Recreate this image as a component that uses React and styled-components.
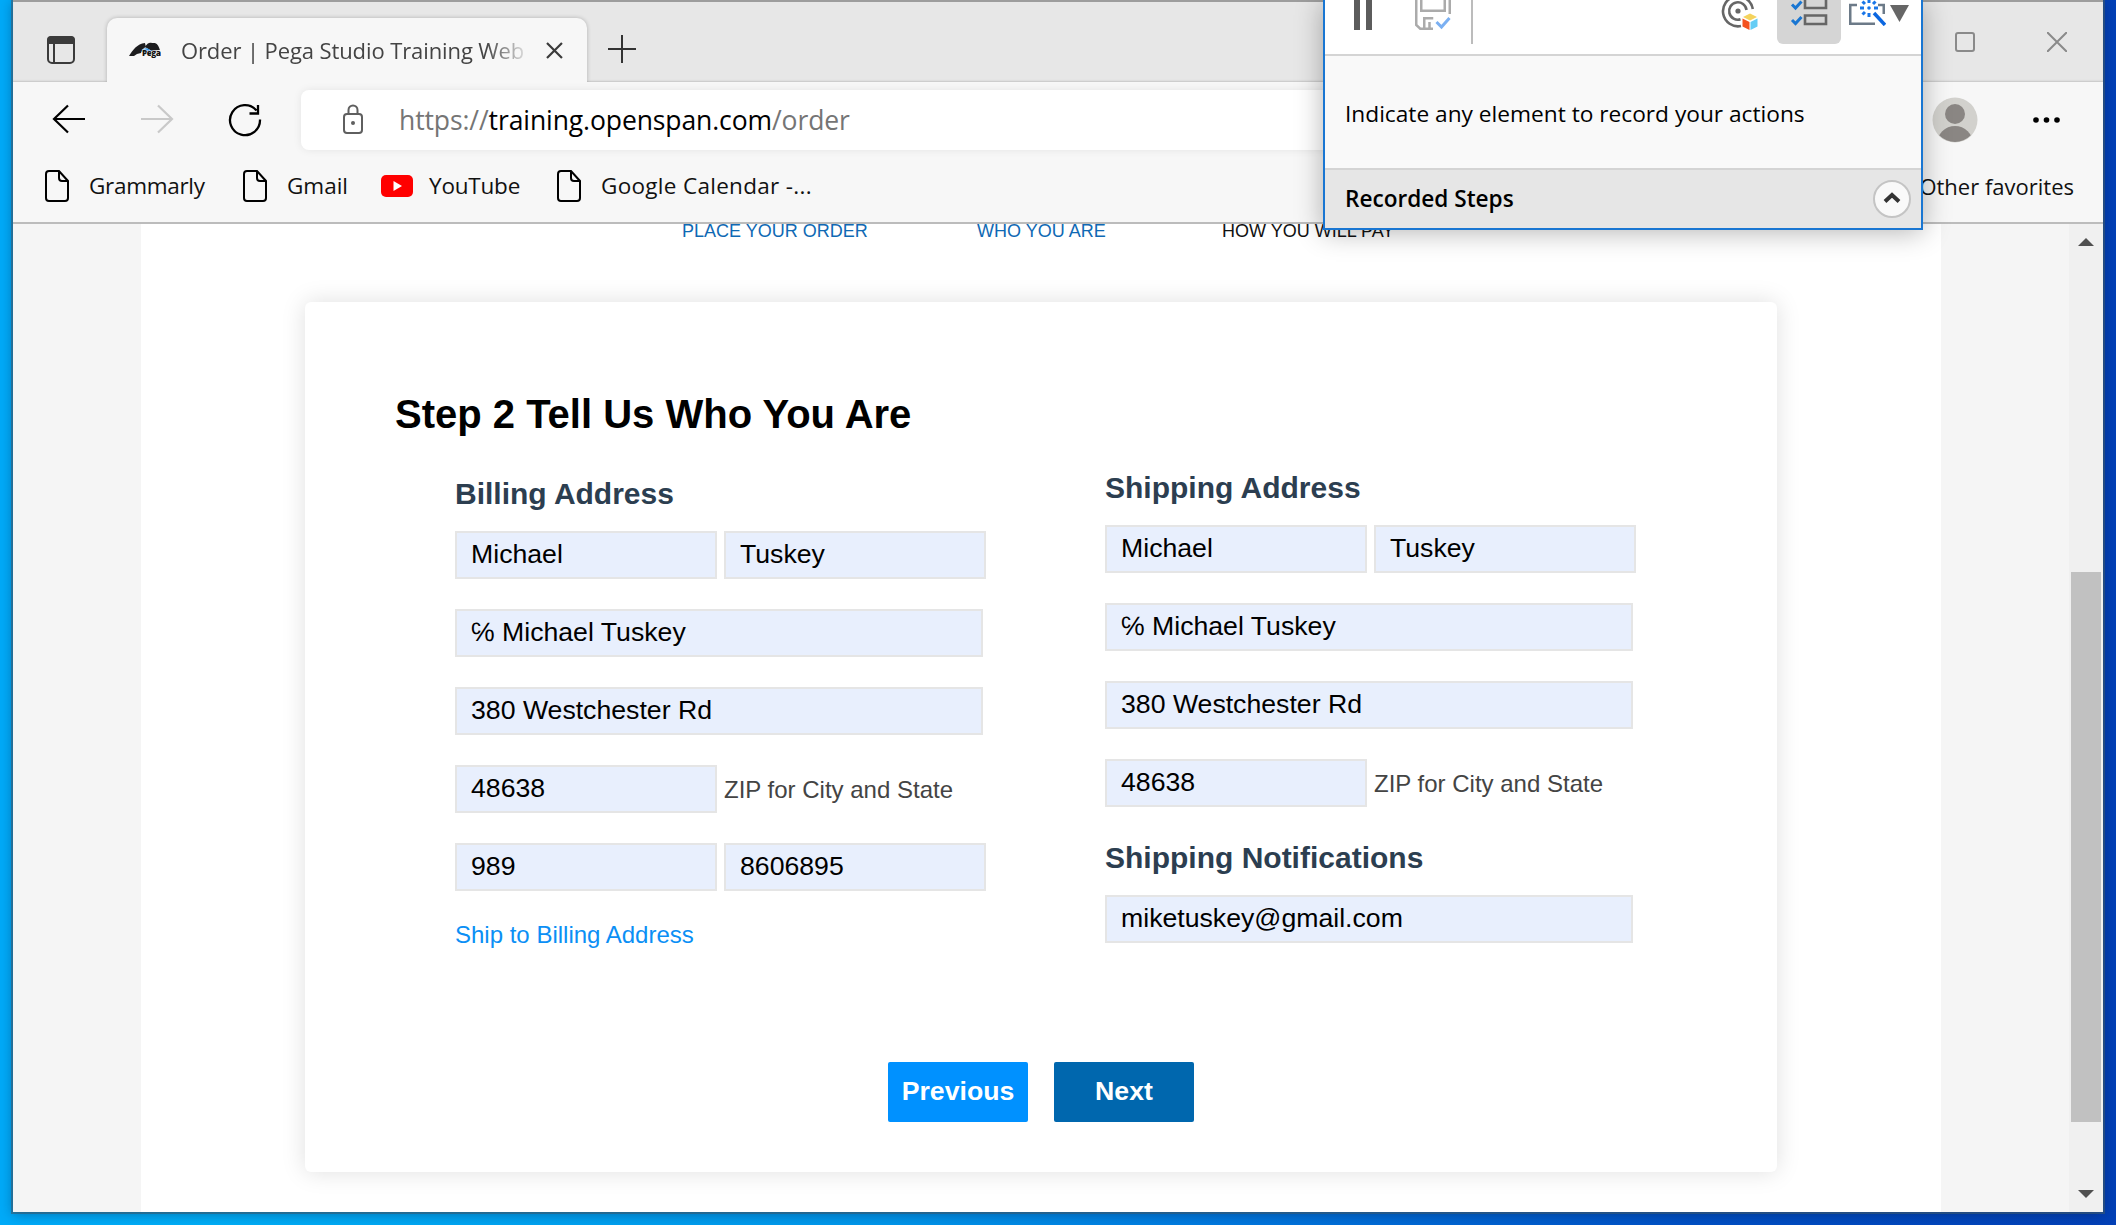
import React from "react";
import styled, { createGlobalStyle } from "styled-components";

const Global = createGlobalStyle`
  *, *::before, *::after { box-sizing: border-box; }
  html, body { margin: 0; padding: 0; overflow: hidden; }
  body { font-family: "Liberation Sans", Arial, sans-serif; }
`;

const ui = `"Open Sans", "Noto Sans", sans-serif`;

const Desktop = styled.div`
  width: 2116px;
  height: 1225px;
  padding: 0 13px 13px;
  overflow: hidden;
  background: linear-gradient(90deg, #00aaf8 0, #00aef6 10%, #0096ea 42%, #0078de 58%, #0050c4 80%, #0340b6 100%);
`;

const Window = styled.div`
  width: 2090px;
  height: 1212px;
  display: flex;
  flex-direction: column;
  border-top: 2px solid #9d9d9d;
  background: #f7f7f7;
  box-shadow: 0 0 0 2px rgba(60, 90, 110, 0.6), 0 2px 12px rgba(0, 20, 60, 0.4);
`;

const TabStrip = styled.div`
  height: 80px;
  flex: none;
  display: flex;
  align-items: flex-end;
  padding-left: 34px;
  background: #e7e7e7;
  box-shadow: inset 0 -2px 2px -1px #c4c4c4;
`;

const StripIcon = styled.svg`
  flex: none;
  width: 28px;
  height: 28px;
  margin: 0 ${(p) => p.$after || 0}px ${(p) => p.$up || 0}px ${(p) => p.$before || 0}px;
`;

const Tab = styled.div`
  width: 480px;
  height: 64px;
  display: flex;
  align-items: center;
  padding: 0 24px 0 22px;
  background: #f7f7f7;
  border-radius: 10px 10px 0 0;
  box-shadow: 0 0 4px rgba(0, 0, 0, 0.24);
  clip-path: inset(-6px -6px 0 -6px);
`;

const TabTitle = styled.div`
  width: 346px;
  margin-left: 20px;
  margin-right: 20px;
  overflow: hidden;
  white-space: nowrap;
  font: 400 22px/32px ${ui};
  letter-spacing: -0.1px;
  color: #444;
  -webkit-mask-image: linear-gradient(90deg, #000 305px, transparent 350px);
  mask-image: linear-gradient(90deg, #000 305px, transparent 350px);
`;

const WindowButtons = styled.div`
  margin-left: auto;
  display: flex;
  align-items: center;
  gap: 72px;
  padding: 0 36px 30px 0;
`;

const Toolbar = styled.div`
  height: 76px;
  flex: none;
  display: flex;
  align-items: center;
  padding: 0 43px 0 38px;
`;

const NavIcon = styled.svg`
  flex: none;
  width: 36px;
  height: 36px;
  margin-right: 52px;
`;

const Address = styled.div`
  flex: none;
  width: 1612px;
  height: 60px;
  margin-left: -14px;
  display: flex;
  align-items: center;
  padding-left: 38px;
  background: #fff;
  border-radius: 8px;
  box-shadow: 0 0 8px rgba(0, 0, 0, 0.08);
`;

const Url = styled.div`
  margin-left: 32px;
  white-space: nowrap;
  font: 400 26.5px/40px ${ui};
  letter-spacing: -0.1px;
  color: #757575;
  b { font-weight: 400; color: #000; }
`;

const Avatar = styled.svg`
  width: 46px;
  height: 46px;
  flex: none;
  margin-left: 19px;
`;

const Dots = styled.svg`
  width: 28px;
  height: 8px;
  flex: none;
  margin-left: auto;
`;

const Favorites = styled.div`
  height: 66px;
  flex: none;
  display: flex;
  align-items: flex-start;
  padding: 10px 29px 0 32px;
  border-bottom: 2px solid #bcbcbc;
`;

const Favorite = styled.div`
  width: ${(p) => p.$w}px;
  display: flex;
  align-items: center;
  gap: ${(p) => p.$gap || 20}px;
  white-space: nowrap;
  font: 400 22.5px/36px ${ui};
  letter-spacing: ${(p) => p.$track || 0}px;
  color: #111;
  svg { flex: none; }
`;

const OtherFavorites = styled.div`
  margin-left: auto;
  white-space: nowrap;
  font: 400 22px/36px ${ui};
  color: #111;
`;

const Viewport = styled.div`
  flex: 1;
  min-height: 0;
  display: flex;
  background: #f5f5f5;
`;

const Page = styled.main`
  width: 1800px;
  margin: 0 128px;
  padding: 0 164px;
  background: #fff;
  overflow: hidden;
`;

const Steps = styled.div`
  display: flex;
  height: 78px;
  padding-left: 377px;
  font-size: 18px;
  line-height: 20px;
  white-space: nowrap;
`;

const Step = styled.div`
  width: ${(p) => p.$w}px;
  margin-top: -3px;
  color: ${(p) => (p.$done ? "#0f69b4" : "#111")};
`;

const Card = styled.section`
  width: 1472px;
  height: 870px;
  display: flex;
  flex-direction: column;
  background: #fff;
  border-radius: 6px;
  box-shadow: 0 0 24px rgba(0, 0, 0, 0.13);
`;

const Title = styled.h1`
  margin: 0;
  padding: 89px 0 0 90px;
  font-size: 40px;
  line-height: 46px;
  font-weight: 700;
  color: #000;
`;

const Columns = styled.div`
  display: flex;
  height: 625px;
  padding-left: 150px;
`;

const Column = styled.div`
  width: 650px;
  padding-top: ${(p) => p.$top}px;
`;

const SectionTitle = styled.h2`
  margin: ${(p) => p.$top || 0}px 0 19px;
  font-size: 30px;
  line-height: 36px;
  font-weight: 700;
  color: #2c3e50;
`;

const Row = styled.div`
  display: flex;
  align-items: center;
  gap: 7px;
  margin-bottom: 30px;
`;

const Field = styled.input`
  width: ${(p) => (p.$wide ? 528 : 262)}px;
  height: 48px;
  padding: 0 14px 2px;
  border: 2px solid #e5e5e5;
  border-radius: 0;
  background: #e8effd;
  font: 400 26.67px "Liberation Sans", Arial, "DejaVu Sans", sans-serif;
  color: #000;
  outline: none;
`;

const Hint = styled.span`
  font-size: 24px;
  line-height: 28px;
  padding-top: 1px;
  color: #444;
`;

const ShipLink = styled.a`
  display: block;
  font-size: 24px;
  line-height: 28px;
  color: #0b8ff5;
`;

const Actions = styled.div`
  display: flex;
  justify-content: center;
  gap: 26px;
`;

const Action = styled.button`
  width: 140px;
  height: 60px;
  padding: 0 0 2px;
  border: 0;
  border-radius: 2px;
  background: ${(p) => (p.$primary ? "#0067ae" : "#0091ff")};
  color: #fff;
  font: 700 26.67px "Liberation Sans", Arial, sans-serif;
`;

const Scrollbar = styled.div`
  width: 34px;
  flex: none;
  display: flex;
  flex-direction: column;
  align-items: center;
  padding: 14px 0;
  background: #f0f0f0;
`;

const Thumb = styled.div`
  width: 30px;
  height: 550px;
  margin-top: 326px;
  margin-bottom: auto;
  background: #c1c1c1;
`;

const Arrow = styled.svg`
  width: 16px;
  height: 8px;
  flex: none;
`;

const Recorder = styled.aside`
  position: absolute;
  left: 1323px;
  top: 0;
  width: 600px;
  height: 230px;
  display: flex;
  flex-direction: column;
  border: 2px solid #1976d2;
  border-top: 0;
  background: #f9f9f9;
  box-shadow: 0 2px 26px rgba(0, 0, 0, 0.3);
  font-family: ${ui};
  color: #000;
`;

const RecorderTools = styled.div`
  height: 56px;
  flex: none;
  display: flex;
  align-items: flex-start;
  background: #fff;
  border-bottom: 2px solid #d4d4d4;
`;

const Tool = styled.svg`
  flex: none;
  margin-left: ${(p) => p.$before || 0}px;
`;

const ToolDivider = styled.div`
  width: 2px;
  height: 44px;
  margin-left: 20px;
  background: #bcbcbc;
`;

const ActiveTool = styled.div`
  width: 64px;
  height: 44px;
  margin-left: 18px;
  border-radius: 0 0 6px 6px;
  background: #d5d5d5;
`;

const Message = styled.div`
  height: 114px;
  flex: none;
  display: flex;
  align-items: center;
  padding-left: 20px;
  padding-top: 3px;
  border-bottom: 2px solid #d4d4d4;
  white-space: nowrap;
  font-size: 22.7px;
`;

const RecordedHeader = styled.div`
  flex: 1;
  display: flex;
  align-items: center;
  justify-content: space-between;
  padding: 0 10px 0 20px;
  background: #e6e6e6;
  font-size: 22.6px;
  font-weight: 600;
  span { padding-bottom: 2px; }
`;

const PageIcon = () => (
  <svg width="24" height="32" viewBox="0 0 24 32" fill="none" stroke="#000" strokeWidth="2">
    <path d="M4 1h10l9 10v17a3 3 0 0 1-3 3H4a3 3 0 0 1-3-3V4a3 3 0 0 1 3-3z" />
    <path d="M14 1v7a3 3 0 0 0 3 3h6" />
  </svg>
);

const Check = ({ y }) => <path d={`M15 ${y}l3.500 3.500 6-6.500`} fill="none" stroke="#1976d2" strokeWidth="3" />;

export default function App() {
  return (
    <Desktop>
      <Global />
      <Window>
        <TabStrip>
          <StripIcon $after={32} $up={18} viewBox="0 0 28 28">
            <rect x="4" y="1" width="20" height="26" rx="4" fill="none" stroke="none" />
            <rect x="1" y="1" width="26" height="26" rx="4" fill="none" stroke="#3b3b3b" strokeWidth="2" />
            <path d="M0 8V4a4 4 0 0 1 4-4h20a4 4 0 0 1 4 4v4z" fill="#3b3b3b" />
            <path d="M7 8v19" stroke="#3b3b3b" strokeWidth="2" />
          </StripIcon>
          <Tab>
            <svg width="32" height="17" viewBox="0 0 32 17">
              <path d="M0 14C4 8 8 2 16 1l1 4c-3 1-4 4-5 6l-4 1-3 2z" fill="#1d1d1f" />
              <path d="M16 5c2-4 5-5 7-4h3c3 1 4 4 5 7l-8 1z" fill="#1d1d1f" />
              <path d="M12 10c2-4 6-5 9-2 2 1 3 1 4 1l-1 1z" fill="#2b95e8" />
              <text x="13" y="14.500" fontFamily="Open Sans, sans-serif" fontSize="8.500" fontWeight="800" textLength="19" fill="#111" stroke="#f7f7f7" strokeWidth="1.200" paintOrder="stroke">Pega</text>
            </svg>
            <TabTitle>Order | Pega Studio Training Web</TabTitle>
            <svg width="17" height="17" viewBox="0 0 17 17" stroke="#3b3b3b" strokeWidth="2.200">
              <path d="M1 1l15 15M16 1L1 16" />
            </svg>
          </Tab>
          <StripIcon $before={21} $up={19} viewBox="0 0 28 28" stroke="#333" strokeWidth="2">
            <path d="M14 0v28M0 14h28" />
          </StripIcon>
          <WindowButtons>
            <svg width="20" height="20" viewBox="0 0 20 20">
              <rect x="1" y="1" width="18" height="18" rx="2" fill="none" stroke="#8a8a8a" strokeWidth="2" />
            </svg>
            <svg width="20" height="20" viewBox="0 0 20 20" stroke="#8a8a8a" strokeWidth="2">
              <path d="M0 0l20 20M20 0L0 20" />
            </svg>
          </WindowButtons>
        </TabStrip>
        <Toolbar>
          <NavIcon viewBox="0 0 36 36" fill="none" stroke="#000" strokeWidth="2.200">
            <path d="M34 17H3M17 3.500L3 17l14 13.500" />
          </NavIcon>
          <NavIcon viewBox="0 0 36 36" fill="none" stroke="#c9c9c9" strokeWidth="2.200">
            <path d="M2 17h31M19 3.500L33 17 19 30.500" />
          </NavIcon>
          <NavIcon viewBox="0 0 36 36" fill="none" stroke="#000" strokeWidth="2.300">
            <path d="M33 17.500A15 15 0 1 1 29.500 8.500M31 3v8.500h-8.500" />
          </NavIcon>
          <Address>
            <svg width="28" height="32" viewBox="0 0 28 32" fill="none" stroke="#5f5f5f" strokeWidth="2">
              <rect x="5" y="10" width="18" height="19" rx="3" />
              <path d="M9.500 10V6a4.500 4.500 0 0 1 9 0v4" />
              <circle cx="14" cy="19" r="2" fill="#5f5f5f" stroke="none" />
            </svg>
            <Url>https://<b>training.openspan.com</b>/order</Url>
          </Address>
          <Avatar viewBox="0 0 46 46">
            <defs>
              <clipPath id="face"><circle cx="23" cy="23" r="22" /></clipPath>
            </defs>
            <circle cx="23" cy="23" r="22.500" fill="#d2d1cd" />
            <g clipPath="url(#face)" fill="#8a8683">
              <circle cx="23" cy="17" r="10" />
              <circle cx="23" cy="47" r="18" />
            </g>
          </Avatar>
          <Dots viewBox="0 0 28 8">
            <circle cx="4" cy="4" r="2.800" /><circle cx="14.500" cy="4" r="2.800" /><circle cx="25" cy="4" r="2.800" />
          </Dots>
        </Toolbar>
        <Favorites>
          <Favorite $w={198} $track={-0.3}><PageIcon />Grammarly</Favorite>
          <Favorite $w={138}><PageIcon />Gmail</Favorite>
          <Favorite $w={176} $gap={16} $track={-0.2}>
            <svg width="32" height="22" viewBox="0 0 32 22">
              <rect width="32" height="22" rx="5" fill="#f00" />
              <path d="M12.500 6l8.500 5-8.500 5z" fill="#fff" />
            </svg>
            YouTube
          </Favorite>
          <Favorite $w={280} $track={0.3}><PageIcon />Google Calendar -...</Favorite>
          <OtherFavorites>Other favorites</OtherFavorites>
        </Favorites>
        <Viewport>
          <Page>
            <Steps>
              <Step $w={295} $done>PLACE YOUR ORDER</Step>
              <Step $w={245} $done>WHO YOU ARE</Step>
              <Step $w={180}>HOW YOU WILL PAY</Step>
            </Steps>
            <Card>
              <Title>Step 2 Tell Us Who You Are</Title>
              <Columns>
                <Column $top={39}>
                  <SectionTitle>Billing Address</SectionTitle>
                  <Row><Field defaultValue="Michael" /><Field defaultValue="Tuskey" /></Row>
                  <Row><Field $wide defaultValue="℅ Michael Tuskey" /></Row>
                  <Row><Field $wide defaultValue="380 Westchester Rd" /></Row>
                  <Row><Field defaultValue="48638" /><Hint>ZIP for City and State</Hint></Row>
                  <Row><Field defaultValue="989" /><Field defaultValue="8606895" /></Row>
                  <ShipLink>Ship to Billing Address</ShipLink>
                </Column>
                <Column $top={33}>
                  <SectionTitle>Shipping Address</SectionTitle>
                  <Row><Field defaultValue="Michael" /><Field defaultValue="Tuskey" /></Row>
                  <Row><Field $wide defaultValue="℅ Michael Tuskey" /></Row>
                  <Row><Field $wide defaultValue="380 Westchester Rd" /></Row>
                  <Row><Field defaultValue="48638" /><Hint>ZIP for City and State</Hint></Row>
                  <SectionTitle $top={33}>Shipping Notifications</SectionTitle>
                  <Row><Field $wide defaultValue="miketuskey@gmail.com" /></Row>
                </Column>
              </Columns>
              <Actions>
                <Action>Previous</Action>
                <Action $primary>Next</Action>
              </Actions>
            </Card>
          </Page>
          <Scrollbar>
            <Arrow viewBox="0 0 16 8"><path d="M0 8l8-8 8 8z" fill="#505050" /></Arrow>
            <Thumb />
            <Arrow viewBox="0 0 16 8"><path d="M0 0l8 8 8-8z" fill="#505050" /></Arrow>
          </Scrollbar>
        </Viewport>
      </Window>

      <Recorder>
        <RecorderTools>
          <Tool $before={29} width="18" height="30" viewBox="0 0 18 30">
            <path d="M0 0h6v30H0zM12 0h6v30h-6z" fill="#5c5c5c" />
          </Tool>
          <Tool $before={43} width="36" height="30" viewBox="0 0 36 30" fill="none" stroke="#ababab" strokeWidth="2.500">
            <path d="M1.250 0v25l4 3.750H18M34.750 0v14M6.250 0v10.750h23.500V0" />
            <path d="M9.250 30V18.250h9M14.500 22v7" />
            <path d="M21.500 22l5 5 8-9" stroke="#7bb0f2" strokeWidth="3" />
          </Tool>
          <ToolDivider />
          <Tool $before={248} width="38" height="31" viewBox="0 0 38 31" fill="none" stroke="#666" strokeWidth="2.600">
            <path d="M31.800 9A15 15 0 1 0 20 26" />
            <path d="M25.500 10a8.700 8.700 0 1 0-6 9.300" />
            <circle cx="17" cy="11" r="2.600" fill="#666" stroke="none" />
            <g stroke="none">
              <path d="M22 17l7-3.500 7 3.500-7 3.500z" fill="#f4d35e" />
              <path d="M21.500 18.500l7 3.500v8l-7-3.500z" fill="#f4511e" />
              <path d="M36.500 18.500l-7 3.500v8l7-3.500z" fill="#64cdf5" />
            </g>
          </Tool>
          <ActiveTool>
            <svg width="64" height="30" viewBox="0 0 64 30">
              <Check y={4.500} />
              <Check y={20} />
              <path d="M28 0v8h21V0M28 15.500h21v8.500H28z" fill="none" stroke="#666" strokeWidth="2.600" />
            </svg>
          </ActiveTool>
          <Tool $before={8} width="37" height="26" viewBox="0 0 37 26" fill="none">
            <path d="M8 5H1.250v18.750H26M29 5h5.750v9" stroke="#6c7a88" strokeWidth="2.500" />
            <path d="M20 0v3M20 13v4M11 8h4M25 8h4M13.500 1.500l2.500 2.500M26.500 1.500L24 4M13.500 14.500L16 12" stroke="#1976e8" strokeWidth="3" />
            <circle cx="20" cy="8" r="1.800" fill="#1976e8" />
            <path d="M25 13l11 12" stroke="#0b66e0" strokeWidth="3.500" />
          </Tool>
          <Tool $before={4} width="19" height="22" viewBox="0 0 19 22">
            <path d="M0 5h19L9.500 22z" fill="#666" />
          </Tool>
        </RecorderTools>
        <Message>Indicate any element to record your actions</Message>
        <RecordedHeader>
          <span>Recorded Steps</span>
          <svg width="38" height="38" viewBox="0 0 38 38">
            <circle cx="19" cy="19" r="18" fill="#f9f9f9" stroke="#c4c4c4" strokeWidth="2" />
            <path d="M12 21.500l7-6.500 7 6.500" fill="none" stroke="#333" strokeWidth="4" />
          </svg>
        </RecordedHeader>
      </Recorder>
    </Desktop>
  );
}
